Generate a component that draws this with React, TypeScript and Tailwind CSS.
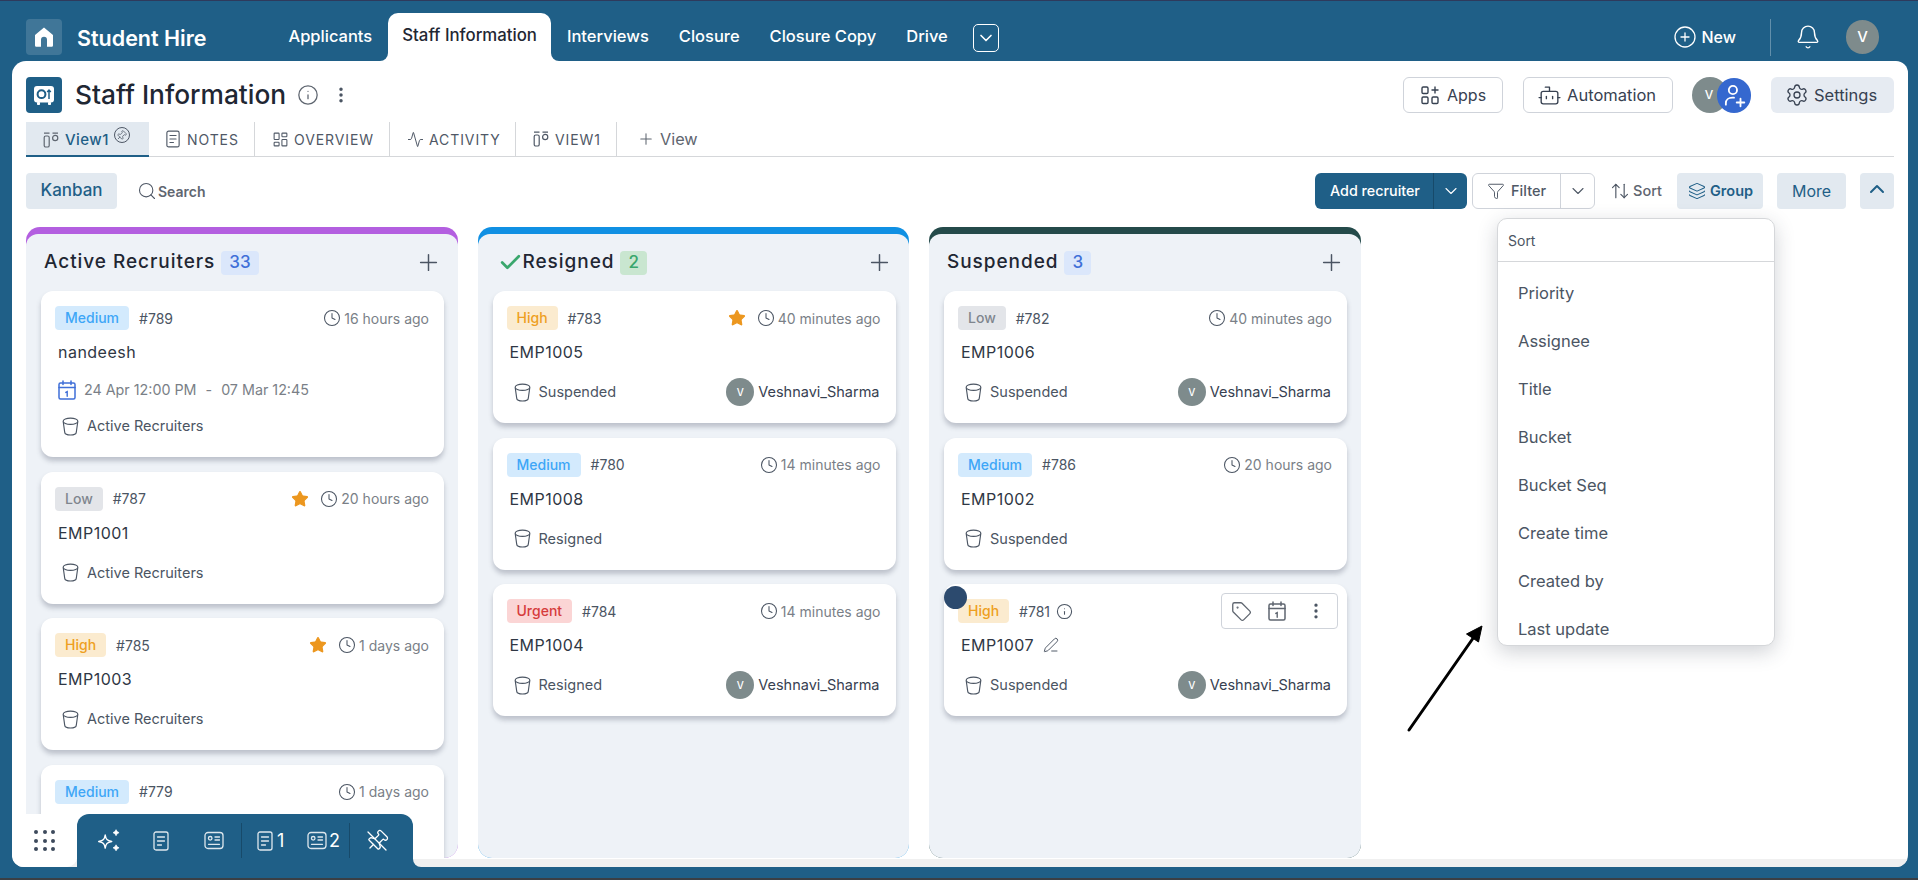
import React from 'react';
import {
  Activity, ArrowUpDown, Bell, Bot, Check, ChevronDown, ChevronUp, CirclePlus, Clock, EllipsisVertical,
  Funnel, Info, Layers, LayoutDashboard, PenLine, Pin, Plus, Search, Settings, Star, Tag,
} from 'lucide-react';

type Priority = 'Low' | 'Medium' | 'High' | 'Urgent';

interface CardData {
  priority: Priority;
  id: string;
  time: string;
  title: string;
  bucket: string;
  star?: boolean;
  date?: boolean;
  assignee?: boolean;
  hovered?: boolean;
}

const badgeClass: Record<Priority, string> = {
  Low: 'bg-[#e3e5e9] text-[#7f858e]',
  Medium: 'bg-[#d3eafd] text-[#3ea6f7]',
  High: 'bg-[#fbebcf] text-[#ee9f22]',
  Urgent: 'bg-[#fbd5d5] text-[#d63c3c]',
};

const ViewIcon = ({ className }: { className?: string }) => (
  <svg viewBox="0 0 16 16" fill="none" stroke="currentColor" strokeWidth="1.2" className={className}>
    <path d="M1 1.2h5.500M9.500 1.200H15" />
    <rect x="1.200" y="4" width="5" height="11" rx="1.600" />
    <circle cx="12.200" cy="6" r="2.600" />
  </svg>
);

const DocIcon = ({ className }: { className?: string }) => (
  <svg viewBox="0 0 16 20" fill="none" stroke="currentColor" strokeWidth="1.3" strokeLinecap="round" className={className}>
    <rect x="1" y="1" width="14" height="18" rx="2" />
    <path d="M4.500 6h7M4.500 10h7M4.500 14h4" />
  </svg>
);

const IdIcon = ({ className }: { className?: string }) => (
  <svg viewBox="0 0 20 18" fill="none" stroke="currentColor" strokeWidth="1.3" strokeLinecap="round" className={className}>
    <rect x="1" y="1" width="18" height="16" rx="3" />
    <circle cx="6.200" cy="6.800" r="1.800" />
    <path d="M11 5.500h4.500M11 8.500h4.500M4.500 12.800h11" />
  </svg>
);

const BucketIcon = () => (
  <svg viewBox="0 0 18 20" fill="none" stroke="#4b5563" strokeWidth="1.2" className="h-[19px] w-[17px] shrink-0">
    <ellipse cx="9" cy="4.500" rx="7.800" ry="3.300" />
    <path d="M1.300 5l1.600 11.200c.2 1.800 2.600 2.800 6.100 2.800s5.900-1 6.100-2.800L16.700 5" />
  </svg>
);

const CalendarIcon = ({ className }: { className?: string }) => (
  <svg viewBox="0 0 18 20" fill="none" stroke="currentColor" strokeWidth="1.5" strokeLinecap="round" className={className}>
    <rect x="1" y="3" width="16" height="16" rx="1.500" />
    <path d="M1 7.500h16M5 1v3.500M13 1v3.500" />
    <path d="M7.800 12.400L9.200 11.600v4.600" strokeWidth="1.4" />
  </svg>
);

const AppsIcon = () => (
  <svg viewBox="0 0 18 20" fill="none" stroke="#374151" strokeWidth="1.4" className="h-[20px] w-[18px]">
    <rect x="1" y="2" width="6" height="6.500" rx="1.200" />
    <rect x="1" y="12" width="6" height="6.500" rx="1.200" />
    <rect x="11" y="12" width="6" height="6.500" rx="1.200" />
    <path d="M14 1.500v7M10.500 5h7" />
  </svg>
);

const SafeIcon = () => (
  <svg viewBox="0 0 20 19" className="h-[19px] w-[20px]">
    <rect x="0" y="0" width="20" height="16.500" rx="3" fill="#fff" />
    <rect x="3" y="16" width="3" height="3" rx="0.800" fill="#fff" />
    <rect x="14" y="16" width="3" height="3" rx="0.800" fill="#fff" />
    <circle cx="7.500" cy="8.200" r="3.900" fill="none" stroke="#1f5f87" strokeWidth="2" />
    <path d="M15 13V4M13.200 6L15 4l1.800 2" fill="none" stroke="#1f5f87" strokeWidth="1.500" />
  </svg>
);

const HomeIcon = () => (
  <svg viewBox="0 0 24 24" fill="#fff" className="h-[24px] w-[24px]">
    <path d="M12 2.500L3 10v10.200c0 .9.700 1.600 1.600 1.600H9v-7a3 3 0 016 0v7h4.400c.9 0 1.600-.7 1.600-1.600V10z" />
  </svg>
);

const SparkIcon = () => (
  <svg viewBox="0 0 24 24" fill="none" stroke="#fff" strokeWidth="1.3" strokeLinejoin="round" className="h-[26px] w-[26px]">
    <path d="M8.500 6.500c.7 4 1.600 5 6 6-4.400 1-5.300 2-6 6-.7-4-1.600-5-6-6 4.400-1 5.300-2 6-6z" />
    <path d="M18.500 1.500l1 1.800 1.800 1-1.800 1-1 1.800-1-1.800-1.800-1 1.800-1zM18.500 15.500l1 1.800 1.800 1-1.800 1-1 1.800-1-1.800-1.800-1 1.800-1z" fill="#fff" strokeWidth="0.600" />
  </svg>
);

const UserPlusIcon = () => (
  <svg viewBox="0 0 24 24" fill="none" stroke="#fff" strokeWidth="1.7" strokeLinecap="round" className="h-[26px] w-[26px]">
    <circle cx="11" cy="6.500" r="3.800" />
    <path d="M4.500 20v-1.500c0-3 2.500-5 6-5h1.500" />
    <path d="M18 14.500v7M14.500 18h7" />
  </svg>
);

const DiagonalPinOff = () => (
  <svg viewBox="0 0 24 24" fill="none" stroke="#fff" strokeWidth="1.3" strokeLinecap="round" strokeLinejoin="round" className="h-[24px] w-[24px]">
    <g transform="rotate(45 12 12)">
      <path d="M12 17v5" />
      <path d="M9 10.760a2 2 0 0 1-1.110 1.790l-1.780.9A2 2 0 0 0 5 15.240V16a1 1 0 0 0 1 1h12a1 1 0 0 0 1-1v-.76a2 2 0 0 0-1.110-1.790l-1.780-.9A2 2 0 0 1 15 10.760V7a1 1 0 0 1 1-1 2 2 0 0 0 0-4H8a2 2 0 0 0 0 4 1 1 0 0 1 1 1z" />
    </g>
    <path d="M3 3l18 18" />
  </svg>
);

const Card = ({ card }: { card: CardData }) => (
  <div className="relative w-[403px] shrink-0 rounded-[12px] bg-white pb-[19px] pl-[14px] pr-[15px] pt-[15px] shadow-[0_4px_5px_rgba(60,70,90,0.28)]">
    {card.hovered && <div className="absolute left-0 top-[2px] h-[23px] w-[23px] rounded-full bg-[#2c4a6e]" />}
    <div className="flex h-[24px] items-center justify-between">
      <div className="flex items-center">
        <span className={`rounded-[4px] px-[10px] text-[14px] font-medium leading-[24px] ${badgeClass[card.priority]}`}>
          {card.priority}
        </span>
        <span className="ml-[10px] text-[14px] text-[#4b5563]">{card.id}</span>
        {card.hovered && <Info className="ml-[6px] h-[17px] w-[17px] text-[#4b5563]" strokeWidth={1.5} />}
      </div>
      {card.hovered ? (
        <div className="-mr-[6px] flex h-[36px] w-[117px] items-center rounded-[4px] border border-[#cfd3da] pl-[9px] text-[#5f6670]">
          <Tag className="h-[21px] w-[21px]" strokeWidth={1.5} />
          <CalendarIcon className="ml-[16px] h-[20px] w-[18px]" />
          <EllipsisVertical className="ml-[20px] h-[20px] w-[20px] text-[#4b5563]" strokeWidth={2} />
        </div>
      ) : (
        <div className="flex items-center text-[14px] text-[#7a7f87]">
          {card.star && <Star className="mr-[11px] h-[18px] w-[18px] fill-[#ec971f] text-[#ec971f]" strokeWidth={1.5} />}
          <Clock className="mr-[3px] h-[18px] w-[18px] text-[#4b5563]" strokeWidth={1.4} />
          <span>{card.time}</span>
        </div>
      )}
    </div>
    <div className="ml-[3px] mt-[10px] flex h-[24px] items-center text-[16px] tracking-[0.03em] text-[#2f3744]">
      {card.title}
      {card.hovered && <PenLine className="ml-[9px] h-[16px] w-[16px] text-[#374151]" strokeWidth={1.3} />}
    </div>
    {card.date && (
      <div className="ml-[3px] mt-[16px] flex h-[20px] items-center text-[14.300px] text-[#7a7f87]">
        <CalendarIcon className="h-[20px] w-[18px] text-[#3f6fd8]" />
        <span className="ml-[8px]">24 Apr 12:00 PM</span>
        <span className="ml-[9px]">-</span>
        <span className="ml-[9px]">07 Mar 12:45</span>
      </div>
    )}
    <div className={`flex h-[24px] items-center justify-between ${card.date ? 'mt-[14px]' : 'mt-[16px]'}`}>
      {card.bucket && (
        <div className="ml-[7px] flex items-center text-[14.500px] text-[#4b5563]">
          <BucketIcon />
          <span className="ml-[8px]">{card.bucket}</span>
        </div>
      )}
      {card.assignee && (
        <div className="mr-[1px] flex items-center">
          <span className="flex h-[28px] w-[28px] items-center justify-center rounded-full bg-[#7e8b8c] text-[10px] font-medium text-white">V</span>
          <span className="ml-[4px] text-[14.500px] text-[#374151]">Veshnavi_Sharma</span>
        </div>
      )}
    </div>
  </div>
);

const Column = ({ band, title, count, countClass, check, cards }: {
  band: string;
  title: string;
  count: number;
  countClass: string;
  check?: boolean;
  cards: CardData[];
}) => (
  <div className={`flex h-full w-[431.500px] shrink-0 flex-col overflow-hidden rounded-[14px] pt-[7px] ${band}`}>
    <div className="flex flex-1 flex-col overflow-hidden rounded-t-[12px] bg-[#eef2f7]">
      <div className="flex h-[57px] shrink-0 items-center pl-[18px] pr-[16px]">
        {check && <Check className="ml-[2px] h-[25px] w-[25px] text-[#3aa76d]" strokeWidth={2.6} />}
        <span className="text-[19px] font-medium tracking-[0.05em] text-[#1f2733]">{title}</span>
        <span className={`ml-[6px] flex h-[24px] items-center rounded-[4px] px-[8px] text-[17px] font-medium ${countClass}`}>{count}</span>
        <Plus className="ml-auto h-[27px] w-[27px] text-[#4b5563]" strokeWidth={1.3} />
      </div>
      <div className="flex flex-col gap-[14.500px] px-[15px]">
        {cards.map(c => <Card key={c.id} card={c} />)}
      </div>
    </div>
  </div>
);

const activeCards: CardData[] = [
  { priority: 'Medium', id: '#789', time: '16 hours ago', title: 'nandeesh', bucket: 'Active Recruiters', date: true },
  { priority: 'Low', id: '#787', time: '20 hours ago', title: 'EMP1001', bucket: 'Active Recruiters', star: true },
  { priority: 'High', id: '#785', time: '1 days ago', title: 'EMP1003', bucket: 'Active Recruiters', star: true },
  { priority: 'Medium', id: '#779', time: '1 days ago', title: '', bucket: '' },
];

const resignedCards: CardData[] = [
  { priority: 'High', id: '#783', time: '40 minutes ago', title: 'EMP1005', bucket: 'Suspended', star: true, assignee: true },
  { priority: 'Medium', id: '#780', time: '14 minutes ago', title: 'EMP1008', bucket: 'Resigned' },
  { priority: 'Urgent', id: '#784', time: '14 minutes ago', title: 'EMP1004', bucket: 'Resigned', assignee: true },
];

const suspendedCards: CardData[] = [
  { priority: 'Low', id: '#782', time: '40 minutes ago', title: 'EMP1006', bucket: 'Suspended', assignee: true },
  { priority: 'Medium', id: '#786', time: '20 hours ago', title: 'EMP1002', bucket: 'Suspended' },
  { priority: 'High', id: '#781', time: '', title: 'EMP1007', bucket: 'Suspended', assignee: true, hovered: true },
];

const sortOptions = ['Priority', 'Assignee', 'Title', 'Bucket', 'Bucket Seq', 'Create time', 'Created by', 'Last update'];

const navTabs = ['Applicants', 'Staff Information', 'Interviews', 'Closure', 'Closure Copy', 'Drive'];

const viewTabs = [
  { label: 'NOTES', icon: <DocIcon className="h-[18px] w-[14px]" />, width: 'w-[106px]', gap: 'ml-[7px]' },
  { label: 'OVERVIEW', icon: <LayoutDashboard className="h-[17px] w-[17px]" strokeWidth={1.5} />, width: 'w-[135px]', gap: 'ml-[5px]' },
  { label: 'ACTIVITY', icon: <Activity className="h-[17px] w-[17px]" strokeWidth={1.4} />, width: 'w-[126px]', gap: 'ml-[5px]' },
  { label: 'VIEW1', icon: <ViewIcon className="h-[16px] w-[16px]" />, width: 'w-[101px]', gap: 'ml-[6px]' },
];

export default function App() {
  return (
    <div className="flex h-[880px] w-[1918px] flex-col overflow-hidden border-b-2 border-t border-b-[#3a3f45] border-t-[#2e3a5c] bg-[#1f5f87] [font-family:Inter,sans-serif]">
      {/* top nav */}
      <div className="flex h-[60px] shrink-0 pl-[26px] pr-[39px] text-white">
        <div className="mt-[18px] flex h-[36px] w-[36px] items-center justify-center rounded-[4px] bg-white/15">
          <HomeIcon />
        </div>
        <span className="ml-[15px] mt-[24px] text-[21.500px] font-semibold leading-[26px]">Student Hire</span>
        <div className="ml-[68px] flex items-end gap-[2px]">
          {navTabs.map(t => t === 'Staff Information' ? (
            <div key={t} className="relative flex h-[48px] items-center rounded-t-[10px] bg-white px-[14px] pb-[2px] text-[16.800px] font-medium text-[#1f2733]">
              {t}
              <span className="absolute -left-[8px] bottom-0 h-[8px] w-[8px] bg-white">
                <span className="block h-full w-full rounded-br-[8px] bg-[#1f5f87]" />
              </span>
              <span className="absolute -right-[8px] bottom-0 h-[8px] w-[8px] bg-white">
                <span className="block h-full w-full rounded-bl-[8px] bg-[#1f5f87]" />
              </span>
            </div>
          ) : (
            <div key={t} className="flex h-[48px] items-center px-[14px] pb-[2px] text-[16.500px] font-medium">{t}</div>
          ))}
          <div className="mb-[9px] ml-[9px] flex h-[28px] w-[26px] items-center justify-center rounded-[5px] border border-white">
            <ChevronDown className="h-[20px] w-[20px]" strokeWidth={2} />
          </div>
        </div>
        <div className="ml-auto flex items-center pt-[12px]">
          <CirclePlus className="h-[24px] w-[24px]" strokeWidth={1.3} />
          <span className="ml-[5px] text-[16px] font-medium">New</span>
          <span className="ml-[34px] h-[37px] w-px bg-white/30" />
          <Bell className="ml-[24px] h-[26px] w-[26px]" strokeWidth={1.3} />
          <span className="ml-[25px] flex h-[34px] w-[33px] items-center justify-center rounded-full bg-[#7e8b8c] text-[15px] font-medium">V</span>
        </div>
      </div>

      {/* main panel */}
      <div className="relative mb-[11px] ml-[12px] mr-[10px] flex flex-1 flex-col overflow-hidden rounded-[12px] rounded-tl-[14px] bg-white">
        <div className="mt-[16px] flex h-[36px] shrink-0 items-center px-[14px]">
          <div className="flex h-[36px] w-[36px] items-center justify-center rounded-[4px] bg-[#1f5f87]">
            <SafeIcon />
          </div>
          <h1 className="ml-[13px] text-[26.300px] font-medium text-[#1f2733]">Staff Information</h1>
          <Info className="ml-[11px] h-[22px] w-[22px] text-[#5f6670]" strokeWidth={1.4} />
          <EllipsisVertical className="ml-[12px] h-[20px] w-[20px] text-[#4b5563]" strokeWidth={2.2} />
          <div className="ml-auto flex items-center">
            <button className="flex h-[36px] w-[100px] items-center rounded-[6px] border border-[#cfd3da] pl-[17px] text-[16px] text-[#374151]">
              <AppsIcon /><span className="ml-[8px]">Apps</span>
            </button>
            <button className="ml-[20px] flex h-[36px] w-[150px] items-center rounded-[6px] border border-[#cfd3da] pl-[13px] text-[16.500px] text-[#374151]">
              <Bot className="h-[25px] w-[25px]" strokeWidth={1.3} /><span className="ml-[5px]">Automation</span>
            </button>
            <div className="relative ml-[19px] h-[36px] w-[59px]">
              <span className="absolute left-0 top-0 flex h-[36px] w-[36px] items-center justify-center rounded-full bg-[#7e8b8c] pr-[2px] text-[12px] font-medium text-white">V</span>
              <span className="absolute left-[25px] top-[1px] flex h-[35px] w-[34px] items-center justify-center rounded-full bg-[#3568cf]">
                <UserPlusIcon />
              </span>
            </div>
            <button className="ml-[20px] flex h-[36px] w-[123px] items-center rounded-[6px] bg-[#e6ebf2] pl-[14px] text-[16.500px] text-[#374151]">
              <Settings className="h-[24px] w-[24px]" strokeWidth={1.3} /><span className="ml-[5px]">Settings</span>
            </button>
          </div>
        </div>

        {/* view tabs */}
        <div className="mx-[14px] mt-[9px] flex h-[35px] shrink-0 border-b border-[#d5d7da] text-[14px] tracking-[0.065em] text-[#4f5866]">
          <div className="flex h-[35px] w-[123px] shrink-0 items-start border-b-2 border-[#1f5f87] bg-[#e2e9f0] pl-[17px] pt-[8px] text-[15px] font-medium tracking-[0.03em] text-[#1f5f87]">
            <ViewIcon className="mt-[2px] h-[16px] w-[16px] text-[#5f6670]" />
            <span className="ml-[6px] leading-[19px]">View1</span>
            <span className="-mt-[3px] ml-[5px] flex h-[16px] w-[16px] items-center justify-center rounded-full border border-[#4f5866]">
              <Pin className="h-[11px] w-[11px] rotate-45 text-[#4f5866]" strokeWidth={1.6} />
            </span>
          </div>
          {viewTabs.map(t => (
            <div key={t.label} className={`flex h-[34px] items-center border-r border-[#d5d7da] pl-[17px] ${t.width}`}>
              {t.icon}
              <span className={t.gap}>{t.label}</span>
            </div>
          ))}
          <div className="ml-[20px] flex h-[34px] items-center text-[16.300px] tracking-normal text-[#5f6670]">
            <Plus className="h-[18px] w-[18px]" strokeWidth={1.4} />
            <span className="ml-[5px]">View</span>
          </div>
        </div>

        {/* toolbar */}
        <div className="mt-[16px] flex h-[36px] shrink-0 items-center px-[14px]">
          <div className="flex h-[36px] w-[91px] items-center justify-center rounded-[4px] bg-[#e2e9f0] text-[17px] font-medium text-[#1f5f87]">Kanban</div>
          <Search className="ml-[20px] h-[20px] w-[20px] text-[#4f5866]" strokeWidth={1.3} />
          <span className="ml-[1px] text-[14px] font-semibold text-[#5f6670]">Search</span>
          <div className="ml-auto flex h-[36px] w-[152px] items-center rounded-[6px] bg-[#1f5f87] text-white">
            <span className="w-[118px] pl-[15px] text-[14.300px] font-medium">Add recruiter</span>
            <span className="flex h-full flex-1 items-center justify-center border-l border-[#174a6a]">
              <ChevronDown className="h-[20px] w-[20px]" strokeWidth={1.3} />
            </span>
          </div>
          <div className="ml-[5px] flex h-[36px] w-[123px] items-center rounded-[6px] border border-[#cfd3da] text-[#4f5866]">
            <div className="flex h-full w-[88px] items-center border-r border-[#cfd3da] pl-[14px] text-[14.500px] font-medium">
              <Funnel className="h-[18px] w-[18px]" strokeWidth={1.3} />
              <span className="ml-[6px]">Filter</span>
            </div>
            <span className="flex flex-1 justify-center"><ChevronDown className="h-[20px] w-[20px]" strokeWidth={1.3} /></span>
          </div>
          <ArrowUpDown className="ml-[15px] h-[20px] w-[20px] text-[#4f5866]" strokeWidth={1.4} />
          <span className="ml-[3px] text-[14.500px] font-medium text-[#5f6670]">Sort</span>
          <div className="ml-[15px] flex h-[36px] w-[86px] items-center rounded-[4px] bg-[#e2e9f0] pl-[11px] text-[14.500px] font-semibold text-[#1f5f87]">
            <Layers className="h-[18px] w-[18px]" strokeWidth={1.4} />
            <span className="ml-[4px]">Group</span>
          </div>
          <div className="ml-[14px] flex h-[36px] w-[69px] items-center justify-center rounded-[4px] bg-[#e2e9f0] text-[16px] text-[#1f5f87]">More</div>
          <div className="ml-[14px] flex h-[36px] w-[34px] items-center justify-center rounded-[4px] bg-[#e2e9f0] pb-[4px] text-[#1f5f87]">
            <ChevronUp className="h-[24px] w-[24px]" strokeWidth={2} />
          </div>
        </div>

        {/* board */}
        <div className="mt-[18px] flex min-h-0 flex-1 gap-[20px] px-[14px]">
          <Column band="bg-[#b35fe0]" title="Active Recruiters" count={33} countClass="bg-[#dbe7fb] text-[#3f6fd8]" cards={activeCards} />
          <Column band="bg-[#1090e3]" title="Resigned" count={2} countClass="bg-[#c9e6d0] text-[#3aa76d]" check cards={resignedCards} />
          <Column band="bg-[#244a4a]" title="Suspended" count={3} countClass="bg-[#dbe7fb] text-[#3f6fd8]" cards={suspendedCards} />
        </div>
        <div className="mt-[1px] h-[8px] shrink-0 bg-[#f0f0f0]" />

        {/* floating dock */}
        <div className="absolute bottom-0 left-0 flex h-[53px]">
          <div className="flex h-full w-[65px] items-center justify-center rounded-bl-[12px] rounded-br-[10px] bg-white">
            <div className="grid grid-cols-3 gap-[4.500px]">
              {Array.from({ length: 9 }).map((_, i) => <span key={i} className="h-[4px] w-[4px] rounded-full bg-[#3d4a5c]" />)}
            </div>
          </div>
          <div className="relative flex h-full w-[336px] items-center rounded-t-[12px] bg-[#1f5f87] text-[18px] text-white">
            <span className="ml-[19px]"><SparkIcon /></span>
            <DocIcon className="ml-[31px] h-[20px] w-[16px] text-white/85" />
            <IdIcon className="ml-[35px] h-[19px] w-[20px] text-white/85" />
            <span className="ml-[17px] h-[35px] w-px bg-[#174a6a]" />
            <DocIcon className="ml-[15px] h-[20px] w-[16px] text-white/85" />
            <span className="ml-[4px] w-[12px]">1</span>
            <IdIcon className="ml-[18px] h-[19px] w-[20px] text-white/85" />
            <span className="ml-[2px]">2</span>
            <span className="ml-[9px] h-[35px] w-px bg-[#174a6a]" />
            <span className="ml-[15px]"><DiagonalPinOff /></span>
            <span className="absolute bottom-0 left-full h-[8px] w-[8px] bg-[#1f5f87]">
              <span className="block h-full w-full rounded-bl-[8px] bg-[#f0f0f0]" />
            </span>
          </div>
        </div>

        {/* sort dropdown */}
        <div className="absolute left-[1485px] top-[157px] h-[428px] w-[278px] overflow-hidden rounded-[10px] border border-[#d5d7da] bg-white shadow-[0_6px_20px_rgba(40,50,70,0.22)]">
          <div className="flex h-[43px] items-center border-b border-[#d5d7da] pl-[10px] text-[14px] text-[#4b5563]">Sort</div>
          <div className="pt-[7px]">
            {sortOptions.map(o => (
              <div key={o} className="flex h-[48px] items-center pl-[20px] text-[16.500px] text-[#4b5563]">{o}</div>
            ))}
          </div>
        </div>

        {/* annotation arrow */}
        <svg viewBox="0 0 90 120" className="absolute left-[1388px] top-[559px] h-[120px] w-[90px]" fill="#000" stroke="#000">
          <path d="M9 110L76 14" strokeWidth="3" strokeLinecap="round" />
          <path d="M82 6L78.500 22 66.500 14z" strokeWidth="1" />
        </svg>
      </div>
    </div>
  );
}
